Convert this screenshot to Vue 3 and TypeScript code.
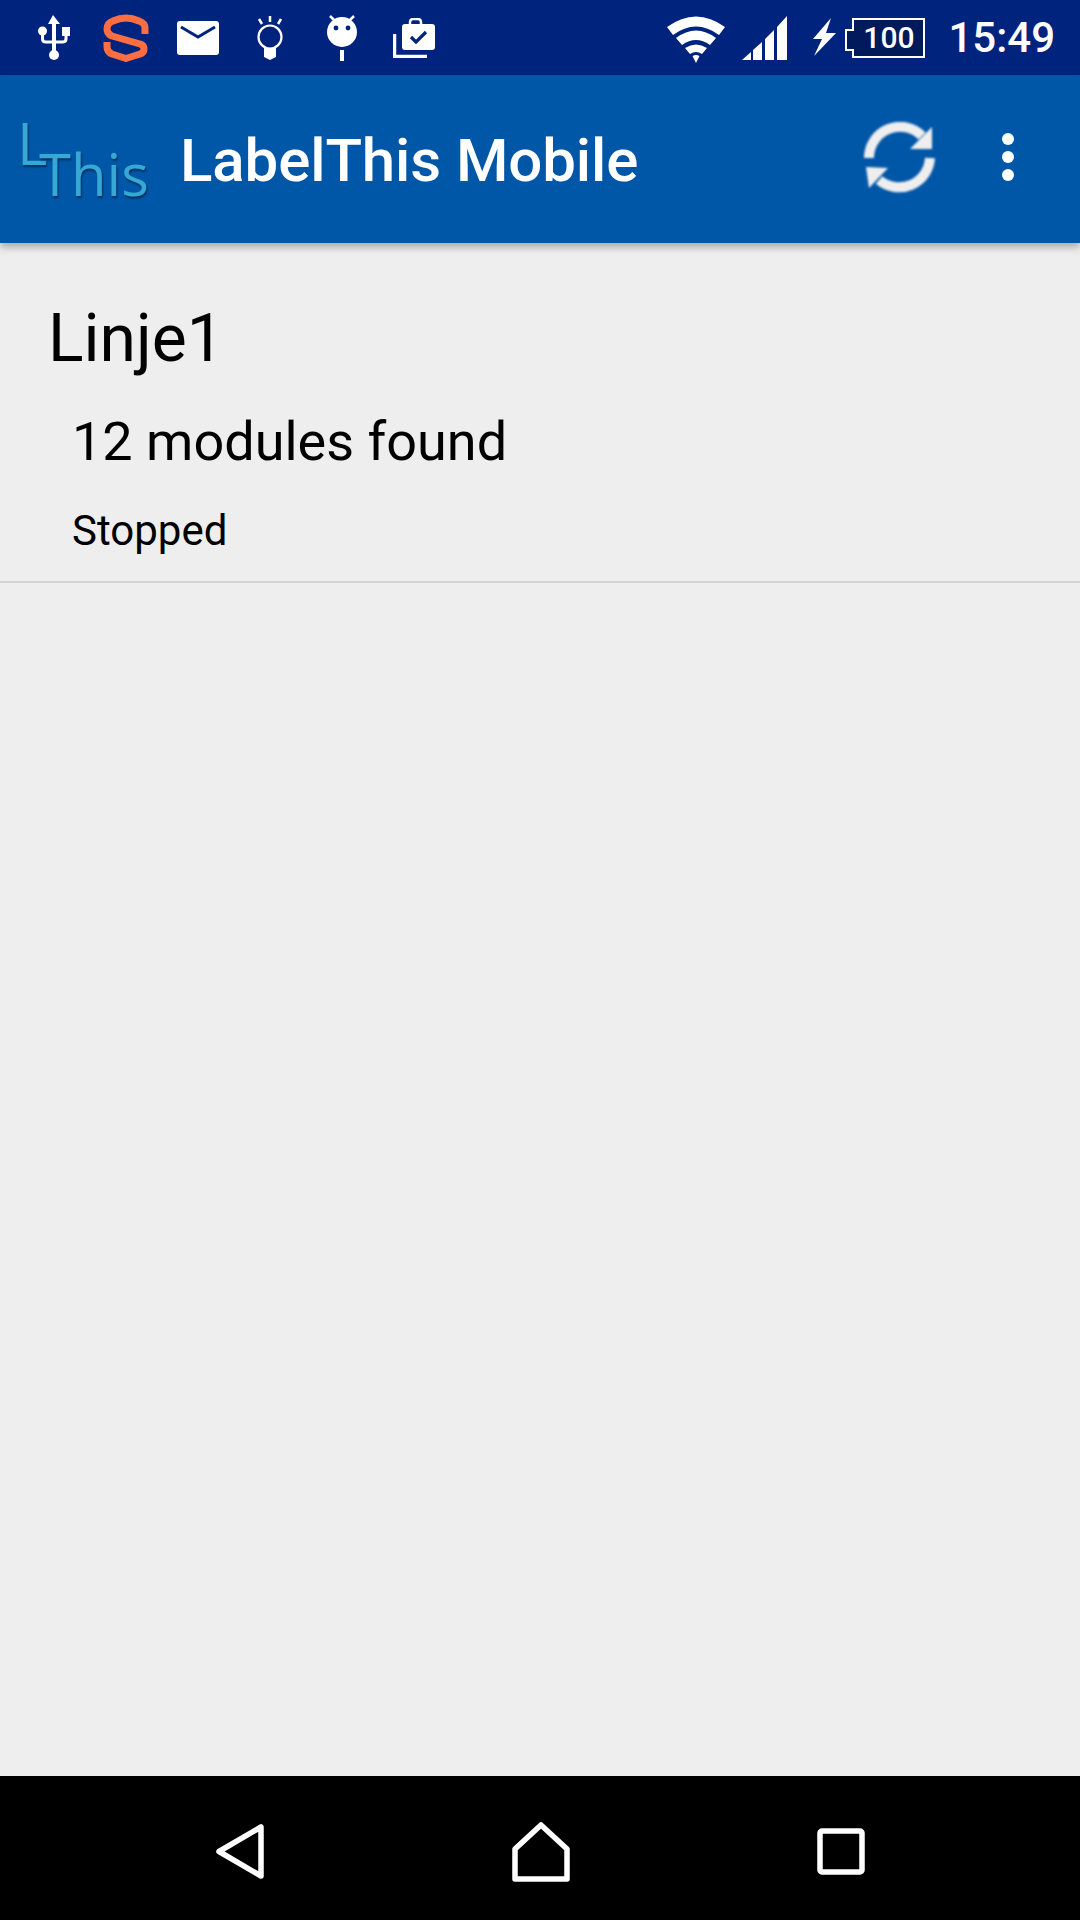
<script setup lang="ts">
const title = 'LabelThis Mobile'
const line = { name: 'Linje1', modules: '12 modules found', state: 'Stopped' }
</script>

<template>
  <div class="phone">
    <div class="status">
      <div class="notif">
        <svg class="i-usb" width="32" height="46" viewBox="0 0 32 46">
          <path d="M15 0 L22 9 H18 V37 H14 V9 H10 Z" fill="#fff" />
          <circle cx="16" cy="40" r="5" fill="#fff" />
          <circle cx="4.5" cy="16" r="4.5" fill="#fff" />
          <rect x="24" y="12" width="8" height="9" fill="#fff" />
          <path d="M4.5 18 V24 Q4.5 27 8 27 H16 M28 20 V24 Q28 27 24 27 H16" fill="none" stroke="#fff" stroke-width="3" />
        </svg>
        <svg class="i-s" width="46" height="48" viewBox="0 0 46 48">
          <path d="M42 20 V14 Q42 9 36 7 Q23 1 10 7 Q4 9 4 15 Q4 20 9 22 L37 30 Q41 31 41 35 Q41 39 37 40 L23 44.500 L9 40 Q4 38 4 33 V28" fill="none" stroke="#ff6e40" stroke-width="7" stroke-linejoin="round" />
        </svg>
        <svg class="i-mail" width="42" height="34" viewBox="0 0 42 34">
          <rect width="42" height="34" rx="3" fill="#fff" />
          <path d="M4 6 L21 16 L38 6" fill="none" stroke="#00247d" stroke-width="3" />
        </svg>
        <svg class="i-bulb" width="26" height="44" viewBox="0 0 26 44">
          <path d="M13 0 V6 M2 3 L5 8 M24 3 L21 8" stroke="#fff" stroke-width="2.5" fill="none" />
          <circle cx="13" cy="21" r="11.5" fill="none" stroke="#fff" stroke-width="2.2" />
          <path d="M7 32 H19 V41 L13 44 L7 41 Z" fill="#fff" />
        </svg>
        <svg class="i-droid" width="32" height="46" viewBox="0 0 32 46">
          <path d="M4 1 L9 6 M28 1 L23 6" stroke="#fff" stroke-width="2.5" fill="none" />
          <circle cx="16" cy="17" r="15" fill="#fff" />
          <circle cx="10" cy="13" r="2.4" fill="#00247d" />
          <circle cx="22" cy="13" r="2.4" fill="#00247d" />
          <rect x="14" y="35" width="4" height="11" fill="#fff" />
        </svg>
        <svg class="i-case" width="42" height="40" viewBox="0 0 42 40">
          <path d="M1.500 16 V38.500 H34" fill="none" stroke="#fff" stroke-width="3.500" />
          <path d="M17 6 V4 Q17 1 20 1 H25 Q28 1 28 4 V6" fill="none" stroke="#fff" stroke-width="2.500" />
          <rect x="9" y="6" width="33" height="26" rx="3" fill="#fff" />
          <path d="M18 19 L23 24 L33 14" fill="none" stroke="#00247d" stroke-width="3.200" />
        </svg>
      </div>
      <div class="system">
        <svg class="i-wifi" width="58" height="47" viewBox="0 0 58 47">
          <path d="M0 11 Q29 -10 58 11 L52 19 Q29 2 6 19 Z" fill="#fff" />
          <path d="M9 22 Q29 7 49 22 L43 29 Q29 19 15 29 Z" fill="#fff" />
          <path d="M18 32 Q29 25 40 32 L35 38 Q29 34 23 38 Z" fill="#fff" />
          <path d="M25.500 40 Q29 38 32.500 40 L29 47 Z" fill="#fff" />
        </svg>
        <svg class="i-signal" width="45" height="44" viewBox="0 0 45 44">
          <path d="M0 44 L9 36 V44 Z M11 34 L20 26 V44 H11 Z M23 23 L32 14 V44 H23 Z M35 11 L45 0 V44 H35 Z" fill="#fff" />
        </svg>
        <svg class="i-bolt" width="23" height="38" viewBox="0 0 23 38">
          <path d="M18 0 L0 21 H9 L1 38 L23 15 H13 Z" fill="#fff" />
        </svg>
        <div class="battery"><span class="battery-num">100</span></div>
        <span class="time">15:49</span>
      </div>
    </div>

    <header class="bar">
      <div class="logo"><span class="logo-l">L</span><span class="logo-this">This</span></div>
      <span class="title">{{ title }}</span>
      <svg class="refresh" width="74" height="72" viewBox="0 0 74 72">
        <g fill="none" stroke="#eee" stroke-width="10">
          <path d="M6 36 A31 31 0 0 1 59 14" />
          <path d="M67 36 A31 31 0 0 1 16 58" />
        </g>
        <path d="M69 5 V27 H47 Z M3 45 L25 46 L6 66 Z" fill="#eee" />
      </svg>
      <div class="dots"><i></i><i></i><i></i></div>
    </header>

    <main class="content">
      <section class="row">
        <div class="name">{{ line.name }}</div>
        <div class="modules">{{ line.modules }}</div>
        <div class="state">{{ line.state }}</div>
      </section>
    </main>

    <nav class="nav">
      <svg width="50" height="55" viewBox="0 0 50 55">
        <path d="M46 3 V52 L4 27.500 Z" fill="none" stroke="#fff" stroke-width="5.500" stroke-linejoin="round" />
      </svg>
      <svg width="58" height="60" viewBox="0 0 58 60">
        <path d="M3 57 V27 L29 3 L55 27 V57 Z" fill="none" stroke="#fff" stroke-width="5.500" stroke-linejoin="round" />
      </svg>
      <svg width="48" height="47" viewBox="0 0 48 47">
        <rect x="3" y="3" width="42" height="41" rx="2" fill="none" stroke="#fff" stroke-width="5.500" />
      </svg>
    </nav>
  </div>
</template>

<style>
html, body { margin: 0; background: #eee; }
</style>

<style scoped>
.phone {
  width: 1080px;
  height: 1920px;
  display: flex;
  flex-direction: column;
  overflow: hidden;
  font-family: Roboto, "Liberation Sans", sans-serif;
  background: #eee;
}
.status {
  height: 75px;
  flex: none;
  display: flex;
  align-items: center;
  justify-content: space-between;
  background: #00247d;
  color: #fff;
  padding: 0 25px 0 38px;
}
.notif, .system { display: flex; align-items: center; }
.i-s { margin-left: 33px; }
.i-mail { margin-left: 28px; }
.i-bulb { margin-left: 38px; }
.i-droid { margin-left: 43px; }
.i-case { margin-left: 35px; }
.i-wifi { margin-top: 4px; }
.i-signal { margin-left: 17px; }
.i-bolt { margin-left: 26px; margin-top: -2px; }
.battery {
  width: 73px;
  height: 40px;
  margin-left: 16px;
  box-sizing: border-box;
  border: 2px solid #fff;
  background: #001a5c;
  display: flex;
  align-items: center;
  justify-content: center;
  position: relative;
}
.battery::before {
  content: "";
  position: absolute;
  left: -9px;
  top: 9px;
  width: 7px;
  height: 18px;
  border: 2px solid #fff;
  border-right: none;
  background: #001a5c;
}
.battery-num { font-size: 30px; font-weight: 500; line-height: 1; }
.time { font-size: 42px; font-weight: 500; margin-left: 23px; }
.bar {
  height: 168px;
  flex: none;
  display: flex;
  align-items: center;
  background: #0057a8;
  box-shadow: 0 4px 8px rgba(0, 0, 0, 0.3);
  position: relative;
  color: #fff;
}
.logo {
  width: 130px;
  height: 100px;
  margin-left: 17px;
  display: flex;
  align-items: flex-start;
  color: #35a8d4;
  text-shadow: 1px 2px 2px rgba(0, 30, 70, 0.7);
  font-family: "Open Sans", sans-serif;
  font-weight: 400;
  line-height: 1;
}
.logo-l { font-size: 58px; margin-top: 5px; width: 22px; }
.logo-this { font-size: 58px; margin-top: 36px; }
.title { font-size: 60px; font-weight: 500; margin-left: 33px; margin-top: 2px; flex: 1; letter-spacing: -0.1px; }
.refresh { margin-right: 65px; margin-top: -2px; filter: blur(0.8px); }
.dots { display: flex; flex-direction: column; gap: 6px; margin-right: 66px; margin-top: -4px; }
.dots i { width: 12px; height: 12px; border-radius: 50%; background: #fff; display: block; }
.content { flex: 1; }
.row {
  height: 340px;
  box-sizing: border-box;
  border-bottom: 2px solid #d4d4d4;
  padding: 57px 0 0 48px;
  color: #000;
}
.name { font-size: 66px; line-height: 78px; }
.modules { font-size: 54px; line-height: 64px; margin: 32px 0 0 24px; }
.state { font-size: 42px; line-height: 50px; margin: 32px 0 0 24px; }
.nav {
  height: 144px;
  flex: none;
  box-sizing: border-box;
  padding: 7px 215px 0;
  background: #000;
  display: flex;
  align-items: center;
  justify-content: space-between;
}
</style>
